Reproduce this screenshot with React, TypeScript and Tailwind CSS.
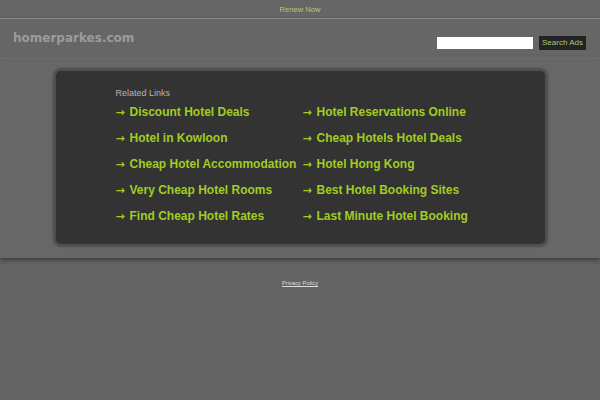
const LEFT = [
  "Discount Hotel Deals",
  "Hotel in Kowloon",
  "Cheap Hotel Accommodation",
  "Very Cheap Hotel Rooms",
  "Find Cheap Hotel Rates",
];

const RIGHT = [
  "Hotel Reservations Online",
  "Cheap Hotels Hotel Deals",
  "Hotel Hong Kong",
  "Best Hotel Booking Sites",
  "Last Minute Hotel Booking",
];

function LinkRow({ label }: { label: string }) {
  return (
    <a
      href="#"
      className="flex h-[26px] items-center whitespace-nowrap text-[12px] font-bold text-[#a0cd20]"
    >
      <span className="mr-[5px] w-[9px] text-[11px] leading-none font-['DejaVu_Sans',sans-serif]">→</span>
      <span className="leading-[14px]">{label}</span>
    </a>
  );
}

export default function App() {
  return (
    <div className="min-h-[400px] w-full bg-[#646464] font-['Liberation_Sans',Arial,sans-serif]">
      {/* top bar */}
      <div className="h-[19px] bg-[#666666] border-b border-[#8c8c8c] shadow-[0_-1px_0_#5a5a5a_inset] text-center leading-[14px]">
        <a href="#" className="text-[7.6px] text-[#b0cc70]">
          Renew Now
        </a>
      </div>

      {/* header */}
      <div className="flex h-[39px] justify-between border-b border-[#737373] bg-[#666666] px-[13px] pr-[14px]">
        <div className="pt-[10px] text-[12px] leading-[18px] font-bold text-[#9c9c9c] font-['DejaVu_Sans',Verdana,sans-serif]">
          homerparkes.com
        </div>
        <div className="flex items-start gap-[6px] pt-[17px]">
          <input type="text" className="mt-px h-[12px] w-[96px] bg-white outline-none" />
          <button className="h-[14px] w-[47px] bg-[#232323] text-[8px] leading-[14px] text-[#a9c77f]">
            Search Ads
          </button>
        </div>
      </div>

      {/* main */}
      <div className="relative bg-[#676767] pt-[11px] pb-[12px] shadow-[0_2px_5px_rgba(0,0,0,0.45)]">
        <div className="mx-auto h-[177px] w-[493px] rounded-[7px] border-2 border-[#4e4e4e] bg-[#333333] pl-[60px] pt-[17px] shadow-[0_0_3px_rgba(0,0,0,0.5)]">
          <div className="text-[9px] leading-[11px] text-[#b4b4b4]">Related Links</div>
          <div className="grid grid-cols-[187px_187px]">
            <div className="flex flex-col">
              {LEFT.map((l) => (
                <LinkRow key={l} label={l} />
              ))}
            </div>
            <div className="flex flex-col">
              {RIGHT.map((l) => (
                <LinkRow key={l} label={l} />
              ))}
            </div>
          </div>
        </div>
      </div>

      {/* footer */}
      <div className="pt-[18px] text-center leading-[8px]">
        <a href="#" className="text-[5.8px] text-[#dddddd] underline">
          Privacy Policy
        </a>
      </div>
    </div>
  );
}
